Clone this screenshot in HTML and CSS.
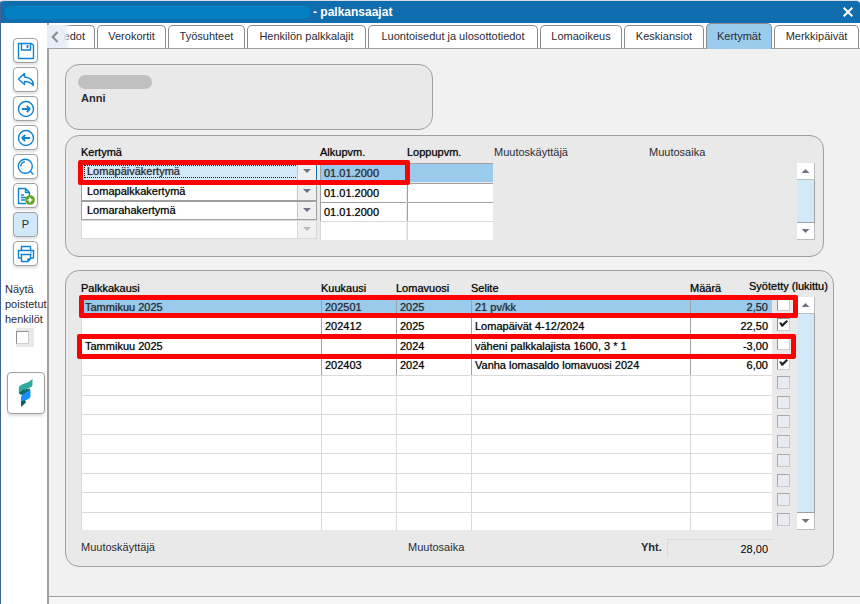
FILE: index.html
```html
<!DOCTYPE html>
<html lang="fi">
<head>
<meta charset="utf-8">
<title>palkansaajat</title>
<link rel="stylesheet" href="styles.css">
</head>
<body>
<header class="titlebar">
  <span class="redacted-title"></span>
  <h1>- palkansaajat</h1>
  <button class="close" aria-label="Sulje"><svg viewBox="0 0 10 10" width="10" height="10"><path d="M.7.7l8.6 8.6M9.3.7L.7 9.3"/></svg></button>
</header>
<div class="workspace">
  <aside class="sidebar">
    <div class="tools">
      <button class="tool" aria-label="Tallenna"><svg viewBox="0 0 18 18"><path d="M1.5 1.500h13l2 2v13h-15zM4.500 1.500v6.500h9V1.500"/><path class="bold" d="M10.500 3v3"/></svg></button>
      <button class="tool" aria-label="Kumoa"><svg viewBox="0 0 18 18"><path d="M7.500 2.500L1.500 8l6 5.500V10.500c4 0 6.500 1 8.800 4 .2-5-2.800-8-8.800-8.500z"/></svg></button>
      <button class="tool" aria-label="Seuraava"><svg viewBox="0 0 18 18"><circle cx="9" cy="9" r="7.500"/><path class="bold" d="M4.800 9h8M9.800 6l3 3-3 3"/></svg></button>
      <button class="tool" aria-label="Edellinen"><svg viewBox="0 0 18 18"><circle cx="9" cy="9" r="7.500"/><path class="bold" d="M13.200 9h-8M8.200 6l-3 3 3 3"/></svg></button>
      <button class="tool" aria-label="Hae"><svg viewBox="0 0 18 18"><circle cx="8.300" cy="8.300" r="7"/><path d="M13 13l3.500 3.500M3.800 8.500a4.500 4.500 0 0 1 4-4.700" /></svg></button>
      <button class="tool" aria-label="Lisää"><svg viewBox="0 0 18 18"><path d="M9 16.500H1.500v-15h7l4 4v4M8.500 1.500v4h4M4 8h3M4 10.500h5M4 13h4"/><circle class="plus-disc" cx="13" cy="13" r="4.800"/><path class="plus" d="M13 10.500v5M10.500 13h5"/></svg></button>
      <button class="tool on">P</button>
      <button class="tool" aria-label="Tulosta"><svg viewBox="0 0 18 18"><path d="M4.500 5.500v-4h9v4M4.500 13h-3V5.500h15V13h-3M3.500 9.500h11M4.500 9.500v7h6.500l2.500-2.500V9.500M11 16.500V14h2.500M13.500 7.500h1"/></svg></button>
    </div>
    <div class="deleted">
      <label for="deleted">Näytä poistetut henkilöt</label>
      <span class="deleted-box"><input type="checkbox" class="check" id="deleted"></span>
    </div>
    <button class="logo" aria-label="Avustaja"><svg viewBox="0 0 16 28" width="16" height="28"><path fill="#2faaa0" d="M14.500 0v5.500c0 1.500-1 2.500-2.500 3L4 12v-1L.800 13.500V9.500C.800 7.500 2 6.500 4 5.500L10.500 3z"/><path fill="#0c6f6c" d="M.8 13.500L4 11l8-1.500v2L5 16c-2.500 0-4-1-4.200-2.500z"/><path fill="#1590ff" d="M12.500 11v6c0 1.500-1 2.500-2.500 3.200L3 23.500v-5c0-1.500 1-2.500 2.500-3.200z"/><path fill="#0d5f63" d="M3 22.500l4-1.500 1 2.500L3 28z"/></svg></button>
  </aside>
  <main class="page">
    <nav class="tabs">
      <button class="scroll-tabs" aria-label="Vieritä vasemmalle"><svg viewBox="0 0 8 12" width="8" height="12"><path d="M6.500 1L1.800 6l4.700 5"/></svg></button>
      <a class="tab cut" href="#">edot</a>
      <a class="tab" href="#">Verokortit</a>
      <a class="tab" href="#">Työsuhteet</a>
      <a class="tab" href="#">Henkilön palkkalajit</a>
      <a class="tab" href="#">Luontoisedut ja ulosottotiedot</a>
      <a class="tab" href="#">Lomaoikeus</a>
      <a class="tab" href="#">Keskiansiot</a>
      <a class="tab active" href="#" aria-current="page">Kertymät</a>
      <a class="tab" href="#">Merkkipäivät</a>
    </nav>
    <div class="content">
      <section class="panel person">
        <span class="redacted-name"></span>
        <strong>Anni</strong>
      </section>

      <section class="panel kinds">
        <table class="kind-table">
          <colgroup><col class="k-name"><col class="k-date"><col class="k-date"><col class="k-user"><col></colgroup>
          <thead><tr><th>Kertymä</th><th>Alkupvm.</th><th>Loppupvm.</th><th class="plain">Muutoskäyttäjä</th><th class="plain">Muutosaika</th></tr></thead>
          <tbody>
            <tr class="selected"><td><div class="combo"><select aria-label="Kertymä 1"><option>Lomapäiväkertymä</option></select><i></i></div></td><td><input aria-label="Alkupvm. 1" value="01.01.2000"></td><td><input aria-label="Loppupvm. 1"></td></tr>
            <tr><td><div class="combo"><select aria-label="Kertymä 2"><option>Lomapalkkakertymä</option></select><i></i></div></td><td><input aria-label="Alkupvm. 2" value="01.01.2000"></td><td><input aria-label="Loppupvm. 2"></td></tr>
            <tr><td><div class="combo"><select aria-label="Kertymä 3"><option>Lomarahakertymä</option></select><i></i></div></td><td><input aria-label="Alkupvm. 3" value="01.01.2000"></td><td><input aria-label="Loppupvm. 3"></td></tr>
            <tr class="blank"><td><div class="combo"><select aria-label="Kertymä 4" disabled><option></option></select><i></i></div></td><td><input aria-label="Alkupvm. 4" disabled></td><td><input aria-label="Loppupvm. 4" disabled></td></tr>
          </tbody>
        </table>
        <div class="scrollbar"><button class="up" aria-label="Ylös"></button><div class="thumb"></div><button class="down" aria-label="Alas"></button></div>
        <div class="mark mark-kind"></div>
      </section>

      <section class="panel entries">
        <div class="entry-area">
          <table class="entry-table">
            <colgroup><col><col class="e-year"><col class="e-year"><col class="e-text"><col class="e-sum"><col class="e-check"></colgroup>
            <thead><tr><th>Palkkakausi</th><th>Kuukausi</th><th>Lomavuosi</th><th>Selite</th><th>Määrä</th><th class="locked"><span>Syötetty (lukittu)</span></th></tr></thead>
            <tbody>
              <tr class="selected"><td>Tammikuu 2025</td><td>202501</td><td>2025</td><td>21 pv/kk</td><td>2,50</td><td><input type="checkbox" class="check" aria-label="Syötetty 1"></td></tr>
              <tr><td></td><td>202412</td><td>2025</td><td>Lomapäivät 4-12/2024</td><td>22,50</td><td><input type="checkbox" class="check" aria-label="Syötetty 2" checked></td></tr>
              <tr><td>Tammikuu 2025</td><td></td><td>2024</td><td>väheni palkkalajista 1600, 3 * 1</td><td>-3,00</td><td><input type="checkbox" class="check" aria-label="Syötetty 3"></td></tr>
              <tr><td></td><td>202403</td><td>2024</td><td>Vanha lomasaldo lomavuosi 2024</td><td>6,00</td><td><input type="checkbox" class="check" aria-label="Syötetty 4" checked></td></tr>
              <tr class="blank"><td></td><td></td><td></td><td></td><td></td><td><input type="checkbox" class="check" aria-label="Syötetty 5" disabled></td></tr>
              <tr class="blank"><td></td><td></td><td></td><td></td><td></td><td><input type="checkbox" class="check" aria-label="Syötetty 6" disabled></td></tr>
              <tr class="blank"><td></td><td></td><td></td><td></td><td></td><td><input type="checkbox" class="check" aria-label="Syötetty 7" disabled></td></tr>
              <tr class="blank"><td></td><td></td><td></td><td></td><td></td><td><input type="checkbox" class="check" aria-label="Syötetty 8" disabled></td></tr>
              <tr class="blank"><td></td><td></td><td></td><td></td><td></td><td><input type="checkbox" class="check" aria-label="Syötetty 9" disabled></td></tr>
              <tr class="blank"><td></td><td></td><td></td><td></td><td></td><td><input type="checkbox" class="check" aria-label="Syötetty 10" disabled></td></tr>
              <tr class="blank"><td></td><td></td><td></td><td></td><td></td><td><input type="checkbox" class="check" aria-label="Syötetty 11" disabled></td></tr>
              <tr class="blank"><td></td><td></td><td></td><td></td><td></td><td><input type="checkbox" class="check" aria-label="Syötetty 12" disabled></td></tr>
            </tbody>
          </table>
          <div class="scrollbar"><button class="up" aria-label="Ylös"></button><div class="thumb"></div><button class="down" aria-label="Alas"></button></div>
        </div>
        <footer class="totals">
          <span>Muutoskäyttäjä</span>
          <span>Muutosaika</span>
          <label for="total">Yht.</label>
          <input id="total" value="28,00" readonly>
        </footer>
        <div class="mark mark-first"></div>
        <div class="mark mark-third"></div>
      </section>
    </div>
    <div class="status"></div>
  </main>
</div>
</body>
</html>
```
FILE: styles.css
```css
:root {
  --font: "Liberation Sans", Arial, sans-serif;
  --line: #a0a0a0;
  --soft: #d9d9d9;
  --panel: #e9e9e9;
  --select: #9acbec;
  --pale: #d2e9f9;
  --blue: #0f83d3;
}

* { box-sizing: border-box; }

body {
  margin: 0;
  min-height: 100vh;
  display: flex;
  flex-direction: column;
  overflow: hidden;
  background: #fff;
  color: #2b2b33;
  font: 11px/15px var(--font);
}

button, input, select { font: inherit; color: inherit; margin: 0; padding: 0; border: 0; border-radius: 0; text-shadow: inherit; }
button { cursor: pointer; }
input, select { appearance: none; width: 100%; }

/* Title bar */
.titlebar {
  display: flex;
  align-items: center;
  height: 23px;
  border-top: 1px solid #d8dde3;
  border-left: 1px solid #3f6399;
  border-radius: 4px 4px 0 0;
  background: #106eae;
  color: #fff;
  padding: 0 7px 0 3px;
}
.redacted-title { width: 306px; height: 13px; border-radius: 7px; background: #0180c3; }
.titlebar h1 { margin: 0 auto 0 3px; font: bold 12px/16px var(--font); }
.close { display: flex; background: none; }
.close path { fill: none; stroke: #fff; stroke-width: 2; }

.workspace { flex: 1; display: flex; }

/* Sidebar */
.sidebar {
  width: 47px;
  flex: none;
  border-left: 1px solid #3f6399;
  padding-top: 15px;
}
.tools { display: flex; flex-direction: column; gap: 4px; padding-left: 12px; }
.tool, .logo {
  display: flex;
  align-items: center;
  justify-content: center;
  border: 1px solid var(--line);
  border-radius: 4px;
  background: #fff;
  box-shadow: 0 2px 3px #ddd;
}
.tool { width: 25px; height: 25px; }
.tool.on { background: var(--pale); }
.tool svg { width: 18px; height: 18px; fill: none; stroke: var(--blue); stroke-width: 1.4; stroke-linejoin: round; }
.tool .bold { stroke-width: 1.8; }
.tool .plus-disc { fill: #5fa31b; stroke: none; }
.tool .plus { stroke: #fff; stroke-width: 1.6; }
.deleted { margin-top: 16px; padding-left: 4px; }
.deleted label { display: block; }
.deleted-box { display: block; width: 18px; margin: 1px 0 0 11px; padding: 3px 0; background: var(--panel); }
.logo { width: 38px; height: 42px; margin: 25px 0 0 6px; }

/* Tabs */
.page { flex: 1; min-width: 0; display: flex; flex-direction: column; background: #f1f1f1; border-left: 2px solid var(--line); }
.tabs {
  position: relative;
  display: grid;
  grid-template-columns: 46fr 69fr 77fr 119fr 170fr 82fr 80fr 66fr 85fr;
  gap: 2px;
  align-items: end;
  height: 26px;
  padding-right: 1px;
  background: #fff;
  border-bottom: 1px solid var(--line);
}
.tab {
  height: 23px;
  border: 1px solid #8c8c8c;
  border-bottom: 0;
  border-radius: 5px 5px 0 0;
  color: inherit;
  line-height: 21px;
  text-align: center;
  text-decoration: none;
  white-space: nowrap;
}
.tab.active { height: 26px; margin-bottom: -1px; background: var(--select); line-height: 25px; }
.tab.cut { text-align: right; padding-right: 9px; border-left: 0; }
.scroll-tabs {
  position: absolute;
  left: -2px;
  bottom: 0;
  width: 24px;
  height: 23px;
  padding-left: 4px;
  display: flex;
  align-items: center;
  background: linear-gradient(to right, #e8edf8 17px, #fff0);
}
.scroll-tabs path { fill: none; stroke: #8b8f96; stroke-width: 2.2; }

/* Panels */
.content { flex: 1; padding: 15px 26px 0 16px; }
.panel { position: relative; border: 1px solid var(--line); border-radius: 14px; background: var(--panel); }
.person { width: 368px; height: 66px; padding: 10px 12px; margin-bottom: 5px; }
.redacted-name { display: block; width: 74px; height: 14px; border-radius: 7px; background: #c0c0c0; }
.person strong { display: block; padding-left: 3px; margin-top: 2px; }
.kinds { display: flex; margin: 0 10px 13px 0; padding: 9px 8px 16px 15px; }

table { border-collapse: separate; border-spacing: 0; table-layout: fixed; flex: 1; color: #000; text-shadow: 0 0 1px #0008; }
th, td { padding: 0; text-align: left; font-weight: 400; white-space: nowrap; }
th.plain { color: #2b2b33; text-shadow: none; }

/* Accrual kinds */
.kind-table th { height: 18px; line-height: 15px; vertical-align: top; }
.k-name { width: 239px; }
.k-date { width: 87px; }
.k-user { width: 155px; }
.kind-table td { height: 19px; vertical-align: top; }
.kind-table .selected td { height: 20px; }
.kind-table input {
  display: block;
  width: 86px;
  height: 19px;
  padding-left: 3px;
  border: 1px solid var(--line);
  border-width: 1px 0 0 1px;
  background: #fff;
}
.kind-table .selected input { background: var(--select); color: #2b2b33; }
.kind-table .blank input { border-color: var(--soft); }
.combo { position: relative; width: 236px; height: 19px; margin-top: -1px; }
.combo select { display: block; height: 19px; padding: 0 20px 1px 5px; border: 1px solid var(--line); background: #fff; opacity: 1; }
.combo i {
  position: absolute;
  top: 1px;
  right: 1px;
  width: 19px;
  height: 17px;
  border-left: 1px solid #c4c4c4;
  background: #f0f0f0;
  pointer-events: none;
}
.combo i::after, .scrollbar button::after {
  content: "";
  display: block;
  width: 8px;
  height: 4px;
  margin: 6px auto 0;
  background: #6f7484;
  clip-path: polygon(0 0, 100% 0, 50% 100%);
}
.selected .combo select { background: var(--pale); color: #2b2b33; border-right: 2px solid #106eae; outline: 1px dotted #222; outline-offset: -4px; }
.blank .combo select, .blank .combo i { border-color: var(--soft); }
.blank .combo i::after { background: #b9b9b9; }

/* Scroll bars */
.scrollbar { flex: none; width: 18px; display: flex; flex-direction: column; background: var(--pale); }
.kinds .scrollbar { margin-top: 18px; }
.scrollbar button { height: 17px; background: #fff; border: 1px solid #bdbdbd; border-width: 0 1px 1px 0; }
.scrollbar button::after { margin-top: 0; }
.scrollbar .up::after { clip-path: polygon(50% 0, 100% 100%, 0 100%); }
.scrollbar .thumb { flex: 1; border: 1px solid var(--line); border-width: 0 1px 1px 0; }

/* Entries */
.entries { padding: 9px 18px 9px 15px; }
.entry-area { display: flex; }
.e-year { width: 75px; }
.e-text { width: 219px; }
.e-sum { width: 82px; }
.e-check { width: 25px; }
.entry-table th { height: 17px; }
.entry-table .locked { position: relative; }
.locked span { position: absolute; top: -1px; left: -23px; }
.entry-table td { height: 20px; padding-left: 3px; line-height: 15px; background: #fff; border: 1px solid var(--line); border-width: 0 0 0 1px; }
.entry-table tr:nth-child(even) td { height: 19px; }
.entry-table tr:last-child td { height: 18px; }
.entry-table .blank td { border-color: var(--soft); border-top-width: 1px; }
.entry-table td:first-child { border-left-color: var(--soft); }
.entry-table .selected td { background: var(--select); color: #2b2b33; }
.entry-table td:nth-child(5) { text-align: right; padding-right: 4px; }
.entry-table tr td:last-child { padding: 1px 0 0 5px; border: 0; background: var(--panel); vertical-align: top; }
.entry-area .scrollbar { margin-top: 17px; }

.check { display: block; width: 13px; height: 13px; background: #fff; border: 1px solid #8f8f8f; border-right-color: #ccc; border-bottom-color: #ccc; }
.check:disabled { background: #e8ecf2; border-color: #a5a8ad #c4c8ce #c4c8ce #a5a8ad; }
.check:checked::after {
  content: "";
  display: block;
  width: 9px;
  height: 7px;
  margin: 1px;
  background: #222;
  clip-path: polygon(0 35%, 25% 35%, 38% 55%, 85% 0, 100% 20%, 42% 95%, 28% 95%);
}

.totals { display: grid; grid-template-columns: 327px 1fr 26px 105px; margin-top: 9px; padding-right: 43px; }
.totals label { font-weight: 700; line-height: 17px; }
.totals span { line-height: 17px; }
.totals input { height: 18px; padding-right: 4px; background: none; text-align: right; color: #000; border: 1px solid var(--soft); border-width: 1px 0 0 1px; }

/* Highlight frames */
.mark { position: absolute; border: 5px solid #fe0000; border-radius: 2px; pointer-events: none; }
.mark-kind { left: 12px; top: 24px; width: 332px; height: 25px; }
.mark-first { left: 13px; right: 35px; top: 24px; height: 23px; }
.mark-third { left: 11px; right: 37px; top: 63px; height: 25px; }

.status { height: 8px; background: #f5f5f5; border-top: 1px solid var(--line); }
```
